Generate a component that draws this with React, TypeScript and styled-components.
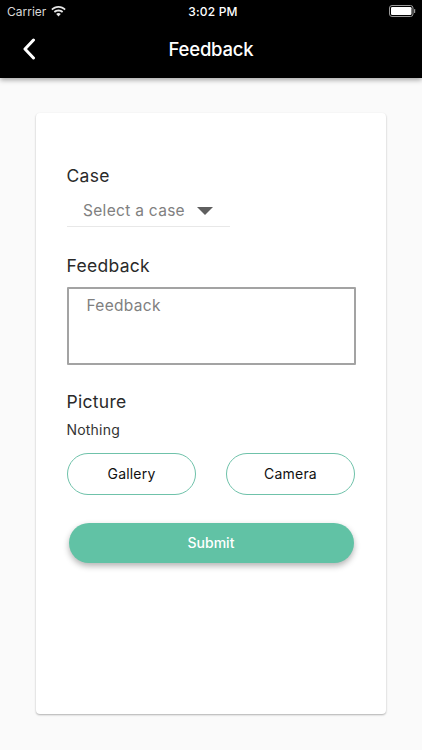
import React from "react";
import styled, { createGlobalStyle } from "styled-components";

const GlobalStyle = createGlobalStyle`
  html, body {
    margin: 0;
    padding: 0;
    background: #fafafa;
    font-family: Inter, "Liberation Sans", sans-serif;
  }
`;

const Page = styled.div`
  width: 422px;
  height: 750px;
  overflow: hidden;
  display: flex;
  flex-direction: column;
  background: #fafafa;
`;

const Header = styled.header`
  height: 78px;
  flex: none;
  background: #000;
  color: #fff;
  box-shadow: 0 2px 5px rgba(0, 0, 0, 0.35);
  display: flex;
  flex-direction: column;
`;

const StatusBar = styled.div`
  height: 22px;
  padding: 0 6px 0 7px;
  display: grid;
  grid-template-columns: 1fr auto 1fr;
  align-items: center;
  font-size: 12px;
  color: #fff;
`;

const Carrier = styled.div`
  display: flex;
  align-items: center;
  gap: 5px;
  color: #d8d8d8;
  font-size: 12px;
`;

const Clock = styled.div`
  font-weight: 500;
  font-size: 12px;
  letter-spacing: 0.2px;
  padding-left: 3px;
`;

const Battery = styled.div`
  justify-self: end;
  display: flex;
`;

const NavBar = styled.div`
  flex: 1;
  display: flex;
  align-items: center;
  justify-content: center;
  position: relative;
  padding-bottom: 2px;
`;

const BackIcon = styled.svg`
  position: absolute;
  left: 22px;
  top: 16px;
`;

const Title = styled.h1`
  margin: 0;
  font-size: 18.5px;
  font-weight: 450;
  letter-spacing: -0.2px;
`;

const Card = styled.main`
  margin: 35px 36px 36px;
  flex: 1;
  background: #fff;
  border-radius: 4px;
  box-shadow: 0 1px 2px rgba(0, 0, 0, 0.3);
  padding: 52px 31px 0;
  display: flex;
  flex-direction: column;
`;

const Label = styled.div`
  font-size: 17.5px;
  line-height: 22px;
  color: #2a2a2a;
  letter-spacing: 0.3px;
  margin-left: -0.5px;
`;

const Select = styled.div`
  width: 163px;
  height: 31px;
  margin-top: 9px;
  padding: 0 0 2px 16px;
  box-sizing: border-box;
  border-bottom: 1px solid #e8e8e8;
  display: flex;
  align-items: center;
  gap: 12px;
  font-size: 15.5px;
  color: #808080;
  letter-spacing: 0.3px;
`;

const Caret = styled.span`
  width: 0;
  height: 0;
  border-left: 8.5px solid transparent;
  border-right: 8.5px solid transparent;
  border-top: 8.5px solid #5f5f5f;
  margin-top: 2px;
`;

const FeedbackLabel = styled(Label)`
  margin-top: 28px;
`;

const TextBox = styled.div`
  height: 78px;
  margin: 10px -0.5px 0;
  box-sizing: border-box;
  border: 2px solid #a3a3a3;
  border-radius: 1px;
  padding: 7px 18px;
  font-size: 15.5px;
  line-height: 20px;
  color: #808080;
  letter-spacing: 0.3px;
`;

const PictureLabel = styled(Label)`
  margin-top: 26px;
`;

const Nothing = styled.div`
  margin-top: 8px;
  margin-left: -0.5px;
  font-size: 14px;
  line-height: 18px;
  color: #333;
  letter-spacing: 0.2px;
`;

const ButtonRow = styled.div`
  margin-top: 14px;
  display: flex;
  justify-content: space-between;
`;

const OutlineButton = styled.button`
  width: 129px;
  height: 41.5px;
  padding: 0;
  background: #fff;
  border: 1px solid #6fc2aa;
  border-radius: 21px;
  font: inherit;
  font-size: 14px;
  font-weight: 400;
  letter-spacing: 0.2px;
  color: #111;
`;

const SubmitButton = styled.button`
  margin: 28px 1.5px 0;
  height: 40.5px;
  padding: 0;
  border: 0;
  border-radius: 21px;
  background: #61c2a5;
  box-shadow: 0 3px 6px rgba(0, 0, 0, 0.3);
  font: inherit;
  font-size: 14px;
  font-weight: 450;
  color: #fff;
`;

const WifiIcon = () => (
  <svg width="15" height="11" viewBox="0 0 15 11" fill="#e8e8e8">
    <path d="M7.5 0C4.7 0 2.2 1.1.3 2.9l1.2 1.3C3 2.7 5.2 1.8 7.5 1.8s4.5.9 6 2.4l1.2-1.3C12.8 1.1 10.3 0 7.5 0z" />
    <path d="M7.5 3.6c-1.8 0-3.5.7-4.7 1.9L4 6.8c.9-.9 2.2-1.4 3.5-1.4s2.6.5 3.5 1.4l1.2-1.3C11 4.3 9.3 3.6 7.5 3.6z" />
    <path d="M7.5 7.1c-.9 0-1.7.3-2.3 1l2.3 2.5 2.3-2.5c-.6-.7-1.4-1-2.3-1z" />
  </svg>
);

const BatteryIcon = () => (
  <svg width="27" height="12" viewBox="0 0 27 12">
    <rect x="0.5" y="0.5" width="23.5" height="11" rx="2.5" fill="none" stroke="#9a9a9a" />
    <rect x="2" y="2" width="20.5" height="8" rx="1.2" fill="#fff" />
    <rect x="25" y="4" width="1.2" height="4" rx="0.6" fill="#9a9a9a" />
  </svg>
);

export default function App() {
  return (
    <Page>
      <GlobalStyle />
      <Header>
        <StatusBar>
          <Carrier>
            Carrier
            <WifiIcon />
          </Carrier>
          <Clock>3:02 PM</Clock>
          <Battery>
            <BatteryIcon />
          </Battery>
        </StatusBar>
        <NavBar>
          <BackIcon width="14" height="22" viewBox="0 0 14 22" fill="none">
            <path d="M11.5 2 L3 11 L11.5 20" stroke="#fff" strokeWidth="3" strokeLinecap="round" strokeLinejoin="round" />
          </BackIcon>
          <Title>Feedback</Title>
        </NavBar>
      </Header>
      <Card>
        <Label>Case</Label>
        <Select>
          Select a case
          <Caret />
        </Select>
        <FeedbackLabel>Feedback</FeedbackLabel>
        <TextBox>Feedback</TextBox>
        <PictureLabel>Picture</PictureLabel>
        <Nothing>Nothing</Nothing>
        <ButtonRow>
          <OutlineButton>Gallery</OutlineButton>
          <OutlineButton>Camera</OutlineButton>
        </ButtonRow>
        <SubmitButton>Submit</SubmitButton>
      </Card>
    </Page>
  );
}
